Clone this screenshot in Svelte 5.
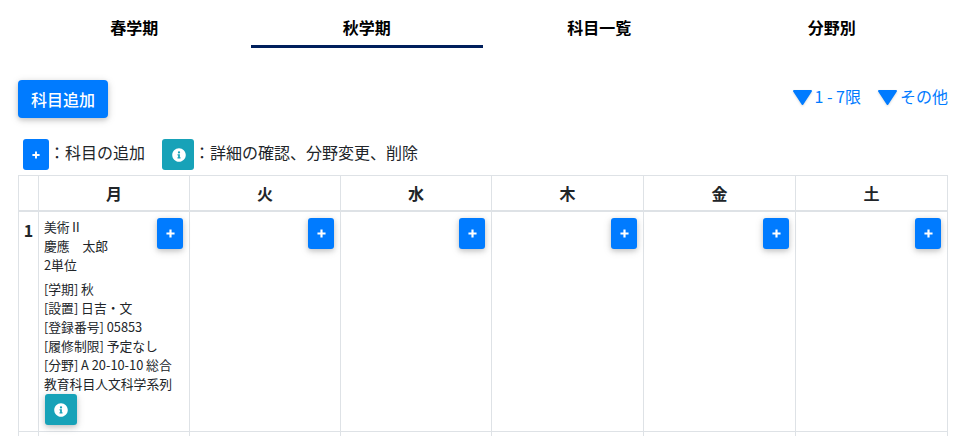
<script>
  const tabs = ['春学期', '秋学期', '科目一覧', '分野別'];
  const days = ['月', '火', '水', '木', '金', '土'];
  const details = ['[学期] 秋', '[設置] 日吉・文', '[登録番号] 05853', '[履修制限] 予定なし', '[分野] A 20-10-10 総合教育科目人文科学系列'];
</script>

{#snippet infoIcon()}
  <svg class="info" viewBox="0 0 512 512" aria-hidden="true"><path fill="#fff" d="M256 8C119 8 8 119 8 256s111 248 248 248 248-111 248-248S393 8 256 8zm0 110a42 42 0 1 1 0 84 42 42 0 0 1 0-84zm56 254c0 7-5 12-12 12h-88c-7 0-12-5-12-12v-24c0-7 5-12 12-12h12v-64h-12c-7 0-12-5-12-12v-24c0-7 5-12 12-12h64c7 0 12 5 12 12v100h12c7 0 12 5 12 12v24z"/></svg>
{/snippet}

{#snippet plusIcon()}
  <svg class="plus" viewBox="0 0 10 10" aria-hidden="true"><path d="M5 .5v9M.5 5h9" stroke="#fff" stroke-width="2.4" fill="none"/></svg>
{/snippet}

{#snippet tri()}
  <svg class="tri" viewBox="0 0 19 15" aria-hidden="true"><path d="M1 1h17L9.5 14z" fill="#007bff" stroke="#007bff" stroke-width="2" stroke-linejoin="round"/></svg>
{/snippet}

<div class="page">
  <nav class="tabs">
    {#each tabs as t, i}
      <div class="tab" class:active={i === 1}>{t}</div>
    {/each}
  </nav>

  <div class="toolbar">
    <button class="add">科目追加</button>
    <div class="filters">
      <span class="filter">{@render tri()}1 - 7限</span>
      <span class="filter">{@render tri()}その他</span>
    </div>
  </div>

  <div class="legend">
    <span class="lbtn blue">{@render plusIcon()}</span>
    <span class="ltext">：科目の追加</span>
    <span class="lbtn teal wide">{@render infoIcon()}</span>
    <span class="ltext">：詳細の確認、分野変更、削除</span>
  </div>

  <div class="table">
    <div class="cell head"></div>
    {#each days as d}
      <div class="cell head day">{d}</div>
    {/each}
    <div class="cell num">1</div>
    <div class="cell course">
      <button class="cellbtn">{@render plusIcon()}</button>
      <div class="info-text">
        <div>美術Ⅱ</div>
        <div>慶應　太郎</div>
        <div>2単位</div>
        <div class="details">
          {#each details as d}<div>{d}</div>{/each}
        </div>
      </div>
      <button class="tealbtn">{@render infoIcon()}</button>
    </div>
    {#each days.slice(1) as d}
      <div class="cell"><button class="cellbtn">{@render plusIcon()}</button></div>
    {/each}
    {#each Array(7) as _}
      <div class="cell next"></div>
    {/each}
  </div>
</div>

<style>
  :global(body) {
    margin: 0;
    background: #fff;
    overflow: hidden;
  }
  .page {
    height: 436px;
    overflow: hidden;
    padding: 0 12px 0 18px;
    box-sizing: border-box;
    font-family: "Noto Sans CJK JP", sans-serif;
    color: #212529;
    font-size: 14px;
  }
  .tabs {
    display: grid;
    grid-template-columns: repeat(4, 1fr);
  }
  .tab {
    height: 48px;
    box-sizing: border-box;
    padding-top: 15px;
    text-align: center;
    font-size: 16px;
    line-height: 24px;
    font-weight: 700;
    color: #000;
  }
  .tab.active {
    border-bottom: 3px solid #001f5c;
  }
  .toolbar {
    display: flex;
    justify-content: space-between;
    align-items: flex-start;
    margin-top: 32px;
  }
  button {
    border: 0;
    padding: 0;
    font-family: inherit;
    color: #fff;
    display: flex;
    align-items: center;
    justify-content: center;
  }
  .add {
    width: 90px;
    height: 38px;
    background: #007bff;
    border-radius: 4px;
    font-size: 16px;
    font-weight: 500;
    box-shadow: 0 2px 5px rgba(0,0,0,.16), 0 2px 10px rgba(0,0,0,.12);
  }
  .filters {
    display: flex;
    gap: 17px;
    margin-top: 4px;
    color: #007bff;
    font-size: 16px;
    line-height: 24px;
  }
  .filter {
    display: flex;
    align-items: center;
  }
  .tri {
    width: 19px;
    height: 15px;
    margin-right: 3px;
    position: relative;
    top: 1px;
    filter: drop-shadow(0 1px 1px rgba(0,0,0,.15));
  }
  .legend {
    display: flex;
    align-items: center;
    margin: 21px 0 5px 5px;
    height: 31px;
    font-size: 16px;
    color: #212529;
  }
  .lbtn {
    display: flex;
    align-items: center;
    justify-content: center;
    width: 26px;
    height: 31px;
    border-radius: 3px;
  }
  .blue { background: #007bff; }
  .teal { background: #17a2b8; }
  .wide { width: 32px; padding-left: 2px; box-sizing: border-box; }
  .ltext { margin-right: 17px; position: relative; top: -3px; }
  .plus { width: 8px; height: 8px; display: block; }
  .cellbtn .plus { width: 9px; height: 9px; }
  .info { width: 14px; height: 14px; display: block; }
  .table {
    display: grid;
    grid-template-columns: 20px 151px 151px 151px 152px 152px 152px;
    grid-template-rows: 36px auto 60px;
    border-top: 1px solid #dee2e6;
    border-left: 1px solid #dee2e6;
    width: 929px;
    box-sizing: content-box;
  }
  .cell {
    border-right: 1px solid #dee2e6;
    border-bottom: 1px solid #dee2e6;
    position: relative;
    box-sizing: border-box;
  }
  .head { border-bottom-width: 2px; }
  .day {
    text-align: center;
    font-size: 16px;
    font-weight: 700;
    line-height: 34px;
  }
  .num {
    font-weight: 700;
    font-size: 16px;
    text-align: center;
    padding-top: 6px;
    line-height: 24px;
  }
  .course {
    padding: 5px 5px 5px;
    height: 220px;
  }
  .info-text {
    font-size: 12.8px;
    line-height: 19px;
    color: #212529;
  }
  .details { margin-top: 5px; }
  .cellbtn {
    position: absolute;
    top: 6px;
    right: 6px;
    width: 26px;
    height: 31px;
    background: #007bff;
    border-radius: 3px;
    box-shadow: 0 2px 5px rgba(0,0,0,.16), 0 2px 10px rgba(0,0,0,.12);
  }
  .tealbtn {
    width: 32px;
    height: 31px;
    margin: 1px 0 0 1px;
    background: #17a2b8;
    border-radius: 3px;
    box-shadow: 0 2px 5px rgba(0,0,0,.16), 0 2px 10px rgba(0,0,0,.12);
  }
</style>
